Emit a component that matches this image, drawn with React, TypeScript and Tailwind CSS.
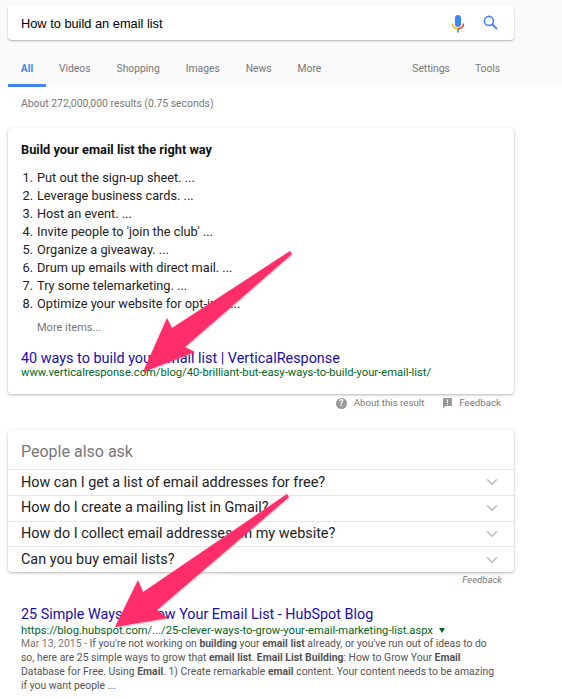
import React from 'react'
import { ChevronDown } from 'lucide-react'

const tabs = ['All', 'Videos', 'Shopping', 'Images', 'News', 'More']
const steps = [
  'Put out the sign-up sheet. ...',
  'Leverage business cards. ...',
  'Host an event. ...',
  "Invite people to 'join the club' ...",
  'Organize a giveaway. ...',
  'Drum up emails with direct mail. ...',
  'Try some telemarketing. ...',
  'Optimize your website for opt-ins. ...',
]
const questions = [
  'How can I get a list of email addresses for free?',
  'How do I create a mailing list in Gmail?',
  'How do I collect email addresses on my website?',
  'Can you buy email lists?',
]

const Mic = () => (
  <svg width="14" height="20" viewBox="0 0 14 20">
    <rect x="4" y="1" width="6" height="12" rx="3" fill="#4285f4" />
    <path d="M1.5 9.5 C1.5 12.5 3.5 14.5 7 14.5" fill="none" stroke="#fbbc05" strokeWidth="1.6" />
    <path d="M12.5 9.5 C12.5 12.5 10.5 14.5 7 14.5" fill="none" stroke="#ea4335" strokeWidth="1.6" />
    <rect x="6.2" y="15" width="1.6" height="3.5" fill="#34a853" />
  </svg>
)

const Search = () => (
  <svg width="15" height="15" viewBox="0 0 16 16" fill="none" stroke="#4285f4" strokeWidth="1.7">
    <circle cx="6.3" cy="6.3" r="4.8" />
    <path d="M9.9 9.9 L15 15" strokeWidth="2" />
  </svg>
)

const Arrows = () => (
  <svg className="absolute left-0 top-0 pointer-events-none" width="562" height="699">
    <defs>
      <filter id="arrowShadow" x="-10%" y="-10%" width="120%" height="120%">
        <feDropShadow dx="0" dy="1" stdDeviation="1.2" floodColor="#000" floodOpacity="0.3" />
      </filter>
    </defs>
    <g fill="#ff2d6b" filter="url(#arrowShadow)">
      <polygon points="290,251 292,254 185,347 195,352 143,372 167,318 172,328" />
      <polygon points="287,494 289,497 157,610 168,618 115,627 138,580 143,592" />
    </g>
  </svg>
)

export default function App() {
  return (
    <div className="relative w-[562px] h-[699px] overflow-hidden bg-white font-['Roboto',sans-serif] text-[#222]">
      <div className="bg-[#fafafa] h-[87px] pt-[5px]">
        <div className="mx-2 w-[506px] h-[35px] bg-white rounded-sm shadow-[0_1px_2px_rgba(0,0,0,0.3)] flex items-center pl-[13px] pr-[16px]">
          <span className="flex-1 pt-[2px] font-['Liberation_Sans',sans-serif] text-[12.8px] text-black">How to build an email list</span>
          <span className="flex mt-[2px] mr-[18px]"><Mic /></span>
          <Search />
        </div>
        <div className="flex mt-[13px] ml-2 h-[34px] text-[10.3px] text-[#777]">
          {tabs.map((t) => (
            <span
              key={t}
              className={t === 'All'
                ? 'w-[38px] h-[34px] text-center font-bold text-[#4285f4] border-b-[3px] border-[#4285f4] pt-[8px] mr-[13px]'
                : 'pt-[8px] mr-[26px]'}
            >
              {t}
            </span>
          ))}
          <span className="pt-[8px] ml-[65px] mr-[25px]">Settings</span>
          <span className="pt-[8px]">Tools</span>
        </div>
      </div>

      <p className="ml-[21px] mt-[9px] h-[16px] text-[10.4px] leading-[16px] text-[#777]">About 272,000,000 results (0.75 seconds)</p>

      <div className="mx-2 mt-[16px] w-[506px] h-[266px] bg-white rounded-sm shadow-[0_1px_3px_rgba(0,0,0,0.3)] pt-[13px] pl-[13px]">
        <h2 className="text-[12.8px] leading-[18px] font-bold text-[#111]">Build your email list the right way</h2>
        <ol className="mt-[10px] text-[12.75px] leading-[18px] text-[#222]">
          {steps.map((s, i) => (
            <li key={s} className="flex">
              <span className="w-[12px] text-right mr-[4px]">{i + 1}.</span>
              <span>{s}</span>
            </li>
          ))}
        </ol>
        <p className="ml-[16px] mt-[7px] text-[11px] leading-[16px] text-[#777]">More items...</p>
        <a className="block mt-[16px] text-[14.4px] leading-[14px] text-[#1a0dab]">40 ways to build your email list | VerticalResponse</a>
        <p className="text-[11.2px] leading-[14px] text-[#006621]">www.verticalresponse.com/blog/40-brilliant-but-easy-ways-to-build-your-email-list/</p>
      </div>

      <div className="flex justify-end items-center h-[16px] mt-[1px] mr-[61px] text-[9.7px] text-[#777]">
        <span className="w-[11px] h-[11px] rounded-full bg-[#999] text-white text-[9px] leading-[11px] font-bold text-center mr-[7px]">?</span>
        <span className="mr-[19px]">About this result</span>
        <svg className="mr-[7px]" width="9" height="11" viewBox="0 0 9 11" fill="#999">
          <path d="M0 0 H9 V8 H2 L0 11 Z" />
          <rect x="4" y="1.5" width="1" height="3.5" fill="#fff" />
          <rect x="4" y="6" width="1" height="1" fill="#fff" />
        </svg>
        <span>Feedback</span>
      </div>

      <div className="mx-2 mt-[19px] w-[506px] h-[142px] bg-white rounded-sm shadow-[0_1px_3px_rgba(0,0,0,0.3)]">
        <div className="h-[39px] pl-[13px] pt-[10px] text-[16px] leading-[24px] text-[#777]">People also ask</div>
        {questions.map((q) => (
          <div key={q} className="h-[25.75px] border-t border-[#e5e5e5] flex items-center justify-between pl-[13px] pr-[13px] text-[14.4px] text-[#222]">
            <span>{q}</span>
            <ChevronDown size={18} color="#bbb" strokeWidth={2} />
          </div>
        ))}
      </div>
      <p className="mt-[1px] mr-[60px] text-right text-[9.5px] leading-[14px] italic text-[#777]">Feedback</p>

      <div className="ml-[21px] mt-[19px] w-[490px] whitespace-nowrap">
        <a className="block text-[14.35px] leading-[18px] text-[#1a0dab]">25 Simple Ways to Grow Your Email List - HubSpot Blog</a>
        <p className="flex items-center text-[11.2px] leading-[13px] text-[#006621]">
          https://blog.hubspot.com/.../25-clever-ways-to-grow-your-email-marketing-list.aspx
          <span className="ml-[6px] w-0 h-0 border-x-[3.5px] border-x-transparent border-t-[5px] border-t-[#006621]" />
        </p>
        <p className="text-[10.4px] leading-[14px] text-[#545454]">
          <span className="text-[#777]">Mar 13, 2015 - </span>If you're not working on <b>building</b> your <b>email list</b> already, or you've run out of ideas to do<br />
          so, here are 25 simple ways to grow that <b>email list</b>. <b>Email List Building</b>: How to Grow Your <b>Email</b><br />
          Database for Free. Using <b>Email</b>. 1) Create remarkable <b>email</b> content. Your content needs to be amazing<br />
          if you want people ...
        </p>
      </div>

      <Arrows />
    </div>
  )
}
